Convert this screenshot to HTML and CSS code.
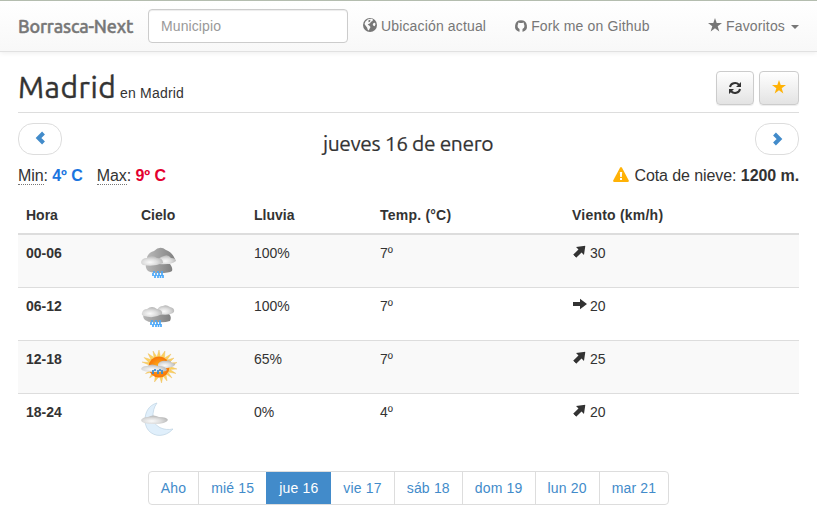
FILE: index.html
```
<!DOCTYPE html>
<html lang="es">
<head>
<meta charset="utf-8">
<title>Borrasca-Next</title>
<link rel="stylesheet" href="styles.css">
</head>
<body>
<svg class="defs" width="0" height="0" aria-hidden="true">
  <defs>
    <radialGradient id="cloud" cx=".4" cy=".65" r=".65"><stop offset="0" stop-color="#fafafa"/><stop offset=".5" stop-color="#dedede"/><stop offset="1" stop-color="#b5b5b5"/></radialGradient>
    <linearGradient id="dark" x1="0" x2="1"><stop offset="0" stop-color="#b8b8b8"/><stop offset="1" stop-color="#808080"/></linearGradient>
    <radialGradient id="sun"><stop offset="0" stop-color="#ffb51c"/><stop offset="1" stop-color="#f87508"/></radialGradient>
    <symbol id="arrow" viewBox="0 0 14 14"><path d="M0 5h7V1.800L14 7l-7 5.200V9H0z"/></symbol>
    <symbol id="star" viewBox="0 0 14 14"><path d="M7 0l1.700 5H14L9.700 8.200 11.300 13.400 7 10.200 2.700 13.400 4.300 8.200 0 5h5.300z"/></symbol>
    <symbol id="drops" viewBox="0 0 12 7"><path d="M2 0v2M6 0v2M10 0v2M1 2v3M4 2v3M7 2v3M10 2v3M3 4v3M6 4v3M8.500 4v3M11 4v3" stroke="#4aa8fa" stroke-width="1.700"/></symbol>
  </defs>
</svg>
<nav class="navbar">
  <a class="brand">Borrasca-Next</a>
  <input class="search" placeholder="Municipio">
  <a class="nav-link location"><svg class="globe" viewBox="0 0 14 14"><circle cx="7" cy="7" r="7"/><path fill="#fafafa" d="M5 1.300l3.500-.5 1.500.7-.5 1.500-1.600.7-.8 1.500L5.500 6l-.8.8 1.500.6 1.300 1.500L6.500 11l-.8 1.500-.8-.5L4 9.500 2.500 7.500 1.500 6l1-2.500zM10.500 5l1.500-.2.500 1.500-.8 2-1.200-.6-.8-1z"/><path d="M5.500 2.200l2-.5-.5 2L5.500 4.200z"/></svg>Ubicación actual</a>
  <a class="nav-link"><svg class="github" viewBox="0 0 12 12"><path d="M6 .3a5.900 5.900 0 0 0-1.900 11.500c.3 0 .4-.2.400-.4v-2.500C3 8.200 2.600 7.200 2.600 5.700c0-.8.200-1.300.6-1.800-.1-.5-.1-1 .1-1.500.6 0 1.100.3 1.600.6a6 6 0 0 1 2.200 0c.5-.3 1-.6 1.600-.6.200.5.200 1 .1 1.500.4.500.6 1 .6 1.800 0 1.500-.4 2.500-1.900 3.200v2.500c0 .2.100.4.400.4A5.900 5.900 0 0 0 6 .3z"/></svg>Fork me on Github</a>
  <a class="nav-link favorites"><svg class="star"><use href="#star"/></svg>Favoritos<i class="caret"></i></a>
</nav>
<main>
  <header class="place">
    <h1>Madrid</h1><span class="province">en Madrid</span>
    <div class="actions">
      <button class="btn refresh" aria-label="Actualizar"><svg viewBox="0 0 14 14"><path d="M2 6C2.800 2 8 .8 11 3.700M12 8c-.8 4-6 5.200-9 2.300" fill="none" stroke="#333" stroke-width="2"/><path d="M13 1v5H8zM1 13V8h5z"/></svg></button>
      <button class="btn gold" aria-label="Favorito"><svg viewBox="0 0 14 14"><use href="#star"/></svg></button>
    </div>
  </header>
  <section class="pager">
    <a class="round"><svg viewBox="0 0 10 14"><path d="M8.500 2L3.500 7l5 5"/></svg></a>
    <h2>jueves 16 de enero</h2>
    <a class="round next"><svg viewBox="0 0 10 14"><path d="M1.500 2l5 5-5 5"/></svg></a>
  </section>
  <section class="summary">
    <span><abbr>Min</abbr>: <b class="cold">4º C</b></span>
    <span><abbr>Max</abbr>: <b class="hot">9º C</b></span>
    <span class="snow"><svg viewBox="0 0 16 15"><path d="M7 .8Q8-.8 9 .8l6.800 12.700Q16 15 14.800 15H1.200Q0 15 .2 13.500z"/><path fill="#fff" d="M6.800 5h2.400l-.4 5H7.200zM7 11h2v2H7z"/></svg>Cota de nieve: <b>1200 m.</b></span>
  </section>
  <table>
    <colgroup><col class="hour"><col class="sky"><col class="rain"><col class="temp"><col></colgroup>
    <thead><tr><th>Hora</th><th>Cielo</th><th>Lluvia</th><th class="wide">Temp. (°C)</th><th class="wide">Viento (km/h)</th></tr></thead>
    <tbody>
      <tr><th>00-06</th><td><svg class="weather" viewBox="0 0 36 36"><path fill="url(#dark)" d="M6 14q2-5 7-6 6-6 12-1 6 2 9 9l-4 3H8z"/><path fill="url(#dark)" d="M5 21h24q3 4 2 7-3 2-12 2-8 0-12-2-3-3-2-7z"/><path fill="url(#cloud)" d="M17 18q1-4 6-5 4-2 7 2 5 0 5 3-5 4-17 3z"/><path fill="url(#cloud)" d="M0 19q1-4 6-4 5-4 10 0 6 0 6 5-9 4-20 2-2-1-2-3z"/><use href="#drops" x="11" y="28" width="12" height="7"/></svg></td><td>100%</td><td>7º</td><td><svg class="wind diagonal"><use href="#arrow"/></svg>30</td></tr>
      <tr><th>06-12</th><td><svg class="weather" viewBox="0 0 36 36"><path fill="url(#dark)" d="M3 18h25q3 3 1 7-6 2-13 1-8 1-12-2-3-3-1-6z"/><path fill="url(#cloud)" d="M16 14q2-4 6-4 3-2 7 1 5 1 4 5-4 4-16 2z"/><path fill="url(#cloud)" d="M1 17q1-4 5-4 5-4 10 0 6 1 5 5-8 5-18 2-3-1-2-3z"/><use href="#drops" x="9" y="24" width="12" height="7"/></svg></td><td>100%</td><td>7º</td><td><svg class="wind"><use href="#arrow"/></svg>20</td></tr>
      <tr><th>12-18</th><td><svg class="weather" viewBox="0 0 36 36"><path fill="#fbd15e" stroke="#eebc58" stroke-width=".4" d="M18 1l1.500 7L24 2l-.5 7L30 5l-4 6 7-2-5 5 8-.5-7 4 7 2.500-7 .5 6 4-8-1.500 4 6-6-4 1 7-4-5-1.500 7-2-7-5 6 1-8-6 4 3-6-7 1.500 6-4-7-1 7-2.500L1 13l7 .5-5-5 7 2-3-6 6 4-1-6.500 4 6z"/><circle cx="18" cy="18" r="10.500" fill="url(#sun)"/><path fill="url(#cloud)" d="M17 15q3-4 8-3 4-2 6 2 4 0 3 2-4 4-17 3z"/><path fill="url(#cloud)" d="M0 20q1-3 6-3 5-3 11 0 8 0 9 4-1 2-12 2-13 0-14-3z"/><path d="M12 21v4M17 21v4M21 21v4M14 20v2M19 20v2" stroke="#388bd0" stroke-width="1.700"/></svg></td><td>65%</td><td>7º</td><td><svg class="wind diagonal"><use href="#arrow"/></svg>25</td></tr>
      <tr><th>18-24</th><td><svg class="weather" viewBox="0 0 36 36"><path fill="#e0effb" stroke="#bdd2e3" stroke-width=".7" d="M16 1C8 3 4 10 4 18c0 12 10 17 18 15 5-1 8-4 10-6-9 2-19-2-20-11-.4-6 1-11 4-15z"/><path fill="url(#cloud)" d="M0 18q2-3 7-3 5-3 11 0 8 0 9 3-2 4-14 4-13 0-13-4z"/></svg></td><td>0%</td><td>4º</td><td><svg class="wind diagonal"><use href="#arrow"/></svg>20</td></tr>
    </tbody>
  </table>
  <div class="days"><a>Aho</a><a>mié 15</a><a class="active">jue 16</a><a>vie 17</a><a>sáb 18</a><a>dom 19</a><a>lun 20</a><a>mar 21</a></div>
</main>
</body>
</html>
```
FILE: styles.css
```
* { box-sizing: border-box; }
body { margin: 0; background: #fff; color: #333; font: 14px/20px "Liberation Sans", Arial, sans-serif; overflow: hidden; }
.defs { position: absolute; }
svg { fill: currentColor; flex: none; overflow: visible; }
.navbar { height: 52px; padding: 0 18px; display: flex; align-items: center; color: #777; border-top: 1px solid #b4bdaf; border-bottom: 1px solid #e1e1e1; background: linear-gradient(#fff, #f8f8f8); box-shadow: 0 1px 5px rgba(0,0,0,.075); }
.brand { width: 130px; font: 500 18px/20px Ubuntu, "Noto Sans", sans-serif; letter-spacing: -.17px; -webkit-text-stroke: .45px #777; white-space: nowrap; }
.search { width: 200px; height: 34px; padding: 6px 12px; border: 1px solid #ccc; border-radius: 4px; background: #fff; font: 14px/20px "Liberation Sans", Arial, sans-serif; letter-spacing: .1px; box-shadow: inset 0 1px 1px rgba(0,0,0,.075); }
.search::placeholder { color: #999; }
.nav-link { display: flex; align-items: center; white-space: nowrap; letter-spacing: .15px; }
.location { margin: 0 29px 0 15px; }
.globe { width: 14px; height: 14px; margin: -2px 4px 0 0; }
.github { width: 12px; height: 12px; margin-right: 4px; }
.star { width: 14px; height: 14px; margin: -2px 4px 0 0; }
.favorites { margin-left: auto; }
.caret { border: 4px solid transparent; border-top-color: currentColor; border-bottom: 0; margin: 2px 0 0 6px; }
main { padding: 0 18px; }
.place { height: 61px; border-bottom: 1px solid #ddd; display: flex; align-items: baseline; padding-top: 19px; }
h1, h2 { margin: 0; font-family: Ubuntu, "Noto Sans", sans-serif; font-weight: 400; }
h1 { width: 102px; font-size: 30px; line-height: 33px; letter-spacing: .5px; -webkit-text-stroke: .4px #333; }
.province { letter-spacing: .2px; }
.actions { display: flex; gap: 5px; margin-left: auto; align-self: flex-start; }
.btn { width: 38px; height: 34px; padding: 0; display: flex; align-items: center; justify-content: center; color: #333; border: 1px solid #ccc; border-radius: 4px; background: linear-gradient(#fff, #e3e3e3); box-shadow: inset 0 1px 0 rgba(255,255,255,.15), 0 1px 1px rgba(0,0,0,.075); }
.btn svg { width: 14px; height: 14px; }
.gold { width: 40px; color: #ffb206; }
.gold svg { margin: -2px 1px 0 0; }
.pager { height: 52px; padding-top: 10px; display: flex; justify-content: space-between; }
.round { width: 44px; height: 32px; border: 1px solid #ddd; border-radius: 15px; display: flex; align-items: center; justify-content: center; color: #428bca; }
.round svg { width: 10px; height: 14px; fill: none; stroke: currentColor; stroke-width: 4; margin-top: -2px; }
.next svg { margin: 0 0 0 2px; }
h2 { font-size: 21px; line-height: 40px; width: 171px; letter-spacing: -.38px; -webkit-text-stroke: .2px #333; white-space: nowrap; }
.summary { height: 32px; display: flex; gap: 14px; font-size: 16px; line-height: 22px; letter-spacing: -.08px; }
abbr { border-bottom: 1px dotted #777; }
.cold { color: #1b75df; }
.hot { color: #e4002f; }
.snow { margin-left: auto; }
.snow svg { width: 16px; height: 15px; color: #ffb206; vertical-align: -1px; margin-right: 5px; }
table { width: 100%; table-layout: fixed; border-collapse: separate; border-spacing: 0; }
.hour { width: 115px; } .sky { width: 113px; } .rain { width: 126px; } .temp { width: 192px; }
th, td { text-align: left; vertical-align: top; padding: 8px; }
thead th { height: 38px; border-bottom: 2px solid #ddd; }
thead .wide { letter-spacing: .22px; }
tbody tr + tr > * { border-top: 1px solid #ddd; }
tbody tr:nth-child(odd) > * { background: #f9f9f9; }
tbody td, tbody th { height: 53px; }
tbody tr:first-child > * { height: 52px; }
.weather { display: block; width: 36px; height: 36px; }
tbody td { line-height: 20px; }
.wind { width: 14px; height: 14px; margin: 0 3px 0 1px; }
.diagonal { transform: rotate(-45deg) scale(1.080); }
.days { display: flex; width: max-content; margin: 25px auto 0; border: 1px solid #ddd; border-radius: 4px; height: 34px; overflow: hidden; color: #428bca; letter-spacing: .17px; }
.days a { padding: 6px 12px; border-left: 1px solid #ddd; }
.days a:first-child { border-left: 0; }
.days .active { background: #428bca; color: #fff; margin: -1px 0; padding-top: 7px; border-color: #428bca; }
.days .active + a { border-left-color: #428bca; }
```
